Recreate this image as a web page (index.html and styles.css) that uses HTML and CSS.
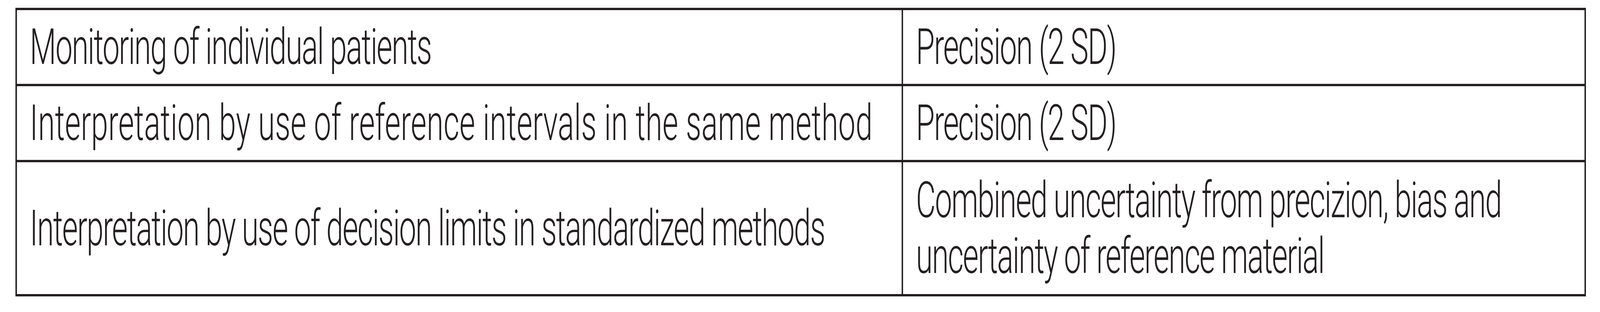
FILE: index.html
```html
<!DOCTYPE html>
<html lang="en">
<head>
<meta charset="utf-8">
<title>Uncertainty by use</title>
<link rel="stylesheet" href="styles.css">
</head>
<body>
<div class="frame">
  <div class="page">
    <div class="table">
      <div class="cell">Monitoring of individual patients</div>
      <div class="cell">Precision (2 SD)</div>
      <div class="cell cell-loose">Interpretation by use of reference intervals in the same method</div>
      <div class="cell">Precision (2 SD)</div>
      <div class="cell">Interpretation by use of decision limits in standardized methods</div>
      <div class="cell">Combined uncertainty from precizion, bias and uncertainty of reference material</div>
    </div>
  </div>
</div>
</body>
</html>
```
FILE: styles.css
```css
html, body {
  margin: 0;
  background: #ffffff;
  overflow: hidden;
}

.frame {
  width: 100vw;
  height: 800px;
  overflow: hidden;
}

/* The reference is 6706px wide; the window is 4096px wide,
   so the 6706px-wide page is fitted horizontally into it. */
.page {
  width: 6706px;
  height: 800px;
  box-sizing: border-box;
  padding: 20px 0 0 65px;
  transform: scaleX(0.610796);
  transform-origin: 0 0;
  color: #231f20;
  font-family: Roboto, "Liberation Sans", sans-serif;
  font-weight: 300;
}

.table {
  display: grid;
  grid-template-columns: 3708px 2856px;
  grid-template-rows: 189px 189px 338px;
  gap: 6px;
  width: max-content;
  border: 6px solid #231f20;
  background: #231f20;
}

.cell {
  display: flex;
  align-items: center;
  background: #ffffff;
  padding: 0 52px 0 54px;
  font-size: 128px;
  line-height: 143px;
  letter-spacing: -3.4px;
}

.cell-loose {
  letter-spacing: 0.4px;
}
```
